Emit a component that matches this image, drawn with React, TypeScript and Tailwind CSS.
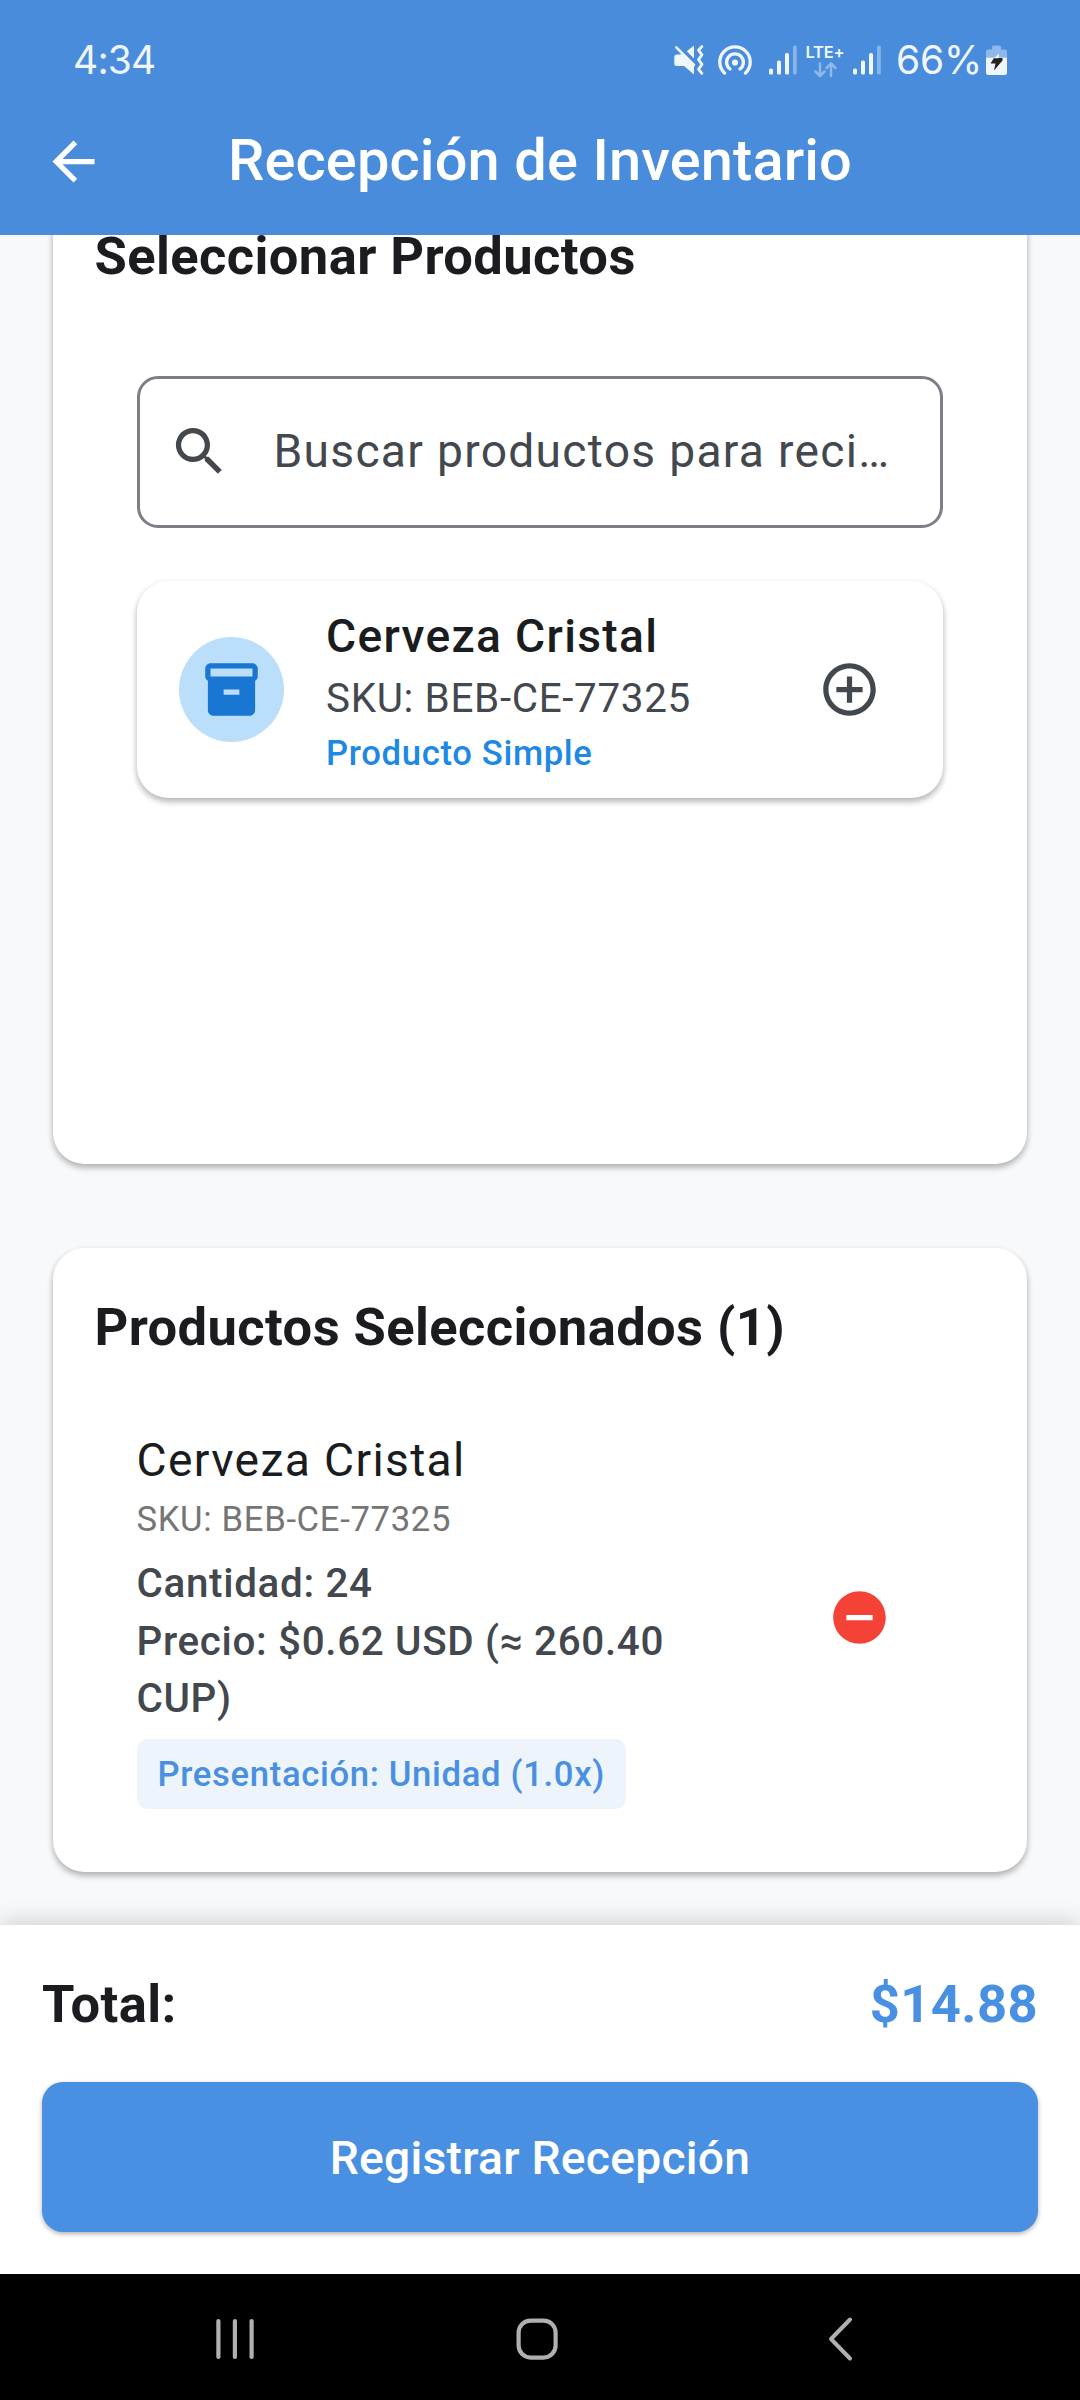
import React from "react";
import { MdArrowBack, MdSearch, MdInventory2, MdAddCircleOutline, MdRemoveCircle } from "react-icons/md";

function SignalBars() {
  return (
    <svg width="28" height="30" viewBox="0 0 28 30" fill="#f0f6fd">
      <rect x="0" y="23.5" width="4" height="6" rx="1.6" />
      <rect x="8" y="15.5" width="4" height="14" rx="1.6" />
      <rect x="16" y="8" width="4" height="21.5" rx="1.6" />
      <rect x="24" y="0.5" width="3.8" height="29" rx="1.6" opacity="0.38" />
    </svg>
  );
}

function MuteIcon() {
  return (
    <svg width="30" height="30" viewBox="0 0 30 30">
      <path d="M0.3 12 Q0.3 9.5 2.8 9.5 H6.5 L9 7.8 L20 19 V29.5 L10 21 H2.8 Q0.3 21 0.3 18.5 Z" fill="#f0f6fd" />
      <path d="M12.8 6.3 L20 0.5 V13.5 Z" fill="#f0f6fd" />
      <path d="M2.3 2.3 L20 20" stroke="#f0f6fd" strokeWidth="2.6" strokeLinecap="round" />
      <path d="M27.8 1.6 L24.5 5.2 L28 9.8 L24.5 14.6 L28 19.4 L24.5 24.2 L27.8 28.4" fill="none" stroke="#f0f6fd" strokeWidth="2.8" strokeLinecap="round" strokeLinejoin="round" />
    </svg>
  );
}

function HotspotIcon() {
  return (
    <svg width="34" height="30" viewBox="0 0 34 30" fill="none" stroke="#f0f6fd" strokeWidth="3.3" strokeLinecap="round">
      <circle cx="17" cy="17.5" r="3.1" fill="#f0f6fd" stroke="none" />
      <path d="M6.5 28 A15.2 15.2 0 1 1 27.5 28" />
      <path d="M12 24 A8.4 8.4 0 1 1 22 24" />
    </svg>
  );
}

function DataArrows() {
  return (
    <svg width="23" height="16" viewBox="0 0 23 16" fill="none" stroke="#f0f6fd" strokeOpacity="0.42" strokeWidth="2.5" strokeLinecap="round" strokeLinejoin="round">
      <path d="M6 1.5 V14 M1.5 9.5 L6 14 L10.5 9.5" />
      <path d="M17 14 V1.5 M12.5 6 L17 1.5 L21.5 6" />
    </svg>
  );
}

function BatteryIcon() {
  return (
    <svg width="22" height="30" viewBox="0 0 22 30">
      <path d="M6 4.5 V2 Q6 0.5 7.5 0.5 H13.5 Q15 0.5 15 2 V4.5 H19 Q21 4.5 21 6.5 V12.5 H0 V6.5 Q0 4.5 2 4.5 Z" fill="#8fb8ea" />
      <path d="M0 12.5 H21 V27.5 Q21 30 18.5 30 H2.5 Q0 30 0 27.5 Z" fill="#f0f6fd" />
      <path d="M8 13 H16.5 V15.5 L8 25.5 L9.5 18.5 H4.5 Z" fill="#222" />
      <path d="M13 8.5 L8 13.2 H12.6 Z" fill="#f0f6fd" />
    </svg>
  );
}

const cardShadow = "shadow-[0_4px_6px_rgba(0,0,0,0.22),0_2px_7px_rgba(0,0,0,0.11)]";

export default function App() {
  return (
    <div className="flex h-[2400px] w-[1080px] flex-col overflow-hidden bg-[#f8f9fb] font-['Roboto',sans-serif] text-[#1a1c20]">
      <header className="h-[235px] shrink-0 bg-[#498cdb] text-white">
        <div className="flex h-[120px] items-center justify-between pl-[73px] pr-[72px] font-['Inter',sans-serif] text-[39px] leading-[120px] text-[#f0f6fd]">
          <span className="tracking-[-0.8px]">4:34</span>
          <div className="flex items-center">
            <MuteIcon />
            <div className="ml-[14px]"><HotspotIcon /></div>
            <div className="ml-[17px]"><SignalBars /></div>
            <div className="ml-[9px] flex h-[32px] w-[38px] flex-col items-center pt-[2px]">
              <span className="text-[16.5px] font-semibold leading-[13px] tracking-[-0.2px]">LTE+</span>
              <div className="mt-[3px]"><DataArrows /></div>
            </div>
            <div className="ml-[9px]"><SignalBars /></div>
            <span className="ml-[15px] w-[84px] whitespace-nowrap tracking-[-0.2px]">66%</span>
            <div className="ml-[6px]"><BatteryIcon /></div>
          </div>
        </div>
        <div className="flex h-[83px] items-center px-[42px]">
          <MdArrowBack size={63} />
          <h1 className="mb-[3px] mr-[63px] flex-1 text-center text-[57.75px] font-medium leading-[76px] tracking-[0.13px]">Recepción de Inventario</h1>
        </div>
      </header>

      <main className="h-[1690px] shrink-0 overflow-hidden pl-[52.5px] pr-[53px]">
        <section className={`mt-[-58.5px] h-[987px] rounded-[31.5px] bg-white px-[42px] pt-[42px] ${cardShadow}`}>
          <h2 className="text-[52.5px] font-bold leading-[75px] tracking-[0.4px]">Seleccionar Productos</h2>
          <div className="mx-[42px] mt-[82px] flex h-[152.5px] items-center rounded-[21px] border-[3px] border-[#7b7f86] pl-[28px] text-[#43474e]">
            <MdSearch size={63} />
            <span className="ml-[43px] whitespace-nowrap text-[46.2px] leading-[63px] tracking-[1.28px]">Buscar productos para reci…</span>
          </div>
          <div className={`mx-[42px] mt-[52.5px] flex h-[217px] items-center rounded-[31.5px] pl-[42px] pr-[62.5px] ${cardShadow}`}>
            <div className="flex size-[105px] items-center justify-center rounded-full bg-[#bbdefb] text-[#1976d2]">
              <MdInventory2 size={63} />
            </div>
            <div className="ml-[42.5px] flex-1 pt-[3px]">
              <div className="text-[46.2px] font-medium leading-[66px] tracking-[1.31px]">Cerveza Cristal</div>
              <div className="pt-px text-[40.4px] leading-[58px] tracking-[0.66px] text-[#43474e]">SKU: BEB-CE-77325</div>
              <div className="text-[34.65px] font-medium leading-[51px] tracking-[0.66px] text-[#1e88e5]">Producto Simple</div>
            </div>
            <MdAddCircleOutline size={63} className="text-[#43474e]" />
          </div>
        </section>

        <section className={`mt-[84px] h-[624.5px] rounded-[31.5px] bg-white px-[42px] pt-[42px] ${cardShadow}`}>
          <h2 className="text-[52.5px] font-bold leading-[75px] tracking-[0.4px]">Productos Seleccionados (1)</h2>
          <div className="mx-[42px] mt-[64px] flex items-center">
            <div className="w-[570px]">
              <div className="text-[46.2px] leading-[63px] tracking-[1.35px]">Cerveza Cristal</div>
              <div className="text-[34.65px] leading-[54px] tracking-[0.66px] text-[#757575]">SKU: BEB-CE-77325</div>
              <div className="mt-[9px] text-[40.4px] font-medium tracking-[0.66px] text-[#43474e]">
                <div className="leading-[58px]">Cantidad: 24</div>
                <div className="leading-[57.5px]">Precio: $0.62 USD (≈ 260.40 CUP)</div>
              </div>
              <div className="mt-[11.5px] w-fit whitespace-nowrap rounded-[10.5px] bg-[#edf4fc] px-[21px] py-[10.5px] text-[34.65px] font-medium leading-[49px] tracking-[0.66px] text-[#4a90e2]">
                Presentación: Unidad (1.0x)
              </div>
            </div>
            <MdRemoveCircle size={63} className="mb-[2.5px] ml-[121.5px] text-[#f44336]" />
          </div>
        </section>
      </main>

      <footer className="relative h-[349px] shrink-0 bg-white px-[42px] pt-[42px] shadow-[0_-5px_21px_rgba(0,0,0,0.15)]">
        <div className="flex items-center justify-between text-[52.5px] font-bold leading-[75px] tracking-[0.4px]">
          <span>Total:</span>
          <span className="text-[#4a90e2]">$14.88</span>
        </div>
        <button className="mt-[40px] block h-[150px] w-full rounded-[21px] bg-[#4a90e2] pt-[3px] text-[46.2px] font-medium tracking-[0.26px] text-white shadow-[0_2px_5px_rgba(0,0,0,0.3)]">
          Registrar Recepción
        </button>
      </footer>

      <nav className="flex h-[126px] shrink-0 items-center bg-black pl-[215px] pt-[4px]">
        <svg width="40" height="42" viewBox="0 0 40 42" stroke="#b0b0b0" strokeWidth="4.2" strokeLinecap="round">
          <path d="M3.4 3 V39 M19.9 3 V39 M36.6 3 V39" />
        </svg>
        <svg className="ml-[260px]" width="44" height="44" viewBox="0 0 44 44" fill="none" stroke="#b0b0b0" strokeWidth="4.2">
          <rect x="3.6" y="3.6" width="37" height="37" rx="12" />
        </svg>
        <svg className="ml-[268px]" width="28" height="46" viewBox="0 0 28 46" fill="none" stroke="#b0b0b0" strokeWidth="4" strokeLinecap="round" strokeLinejoin="round">
          <path d="M23 3.5 L4 23 L23 42.5" />
        </svg>
      </nav>
    </div>
  );
}
